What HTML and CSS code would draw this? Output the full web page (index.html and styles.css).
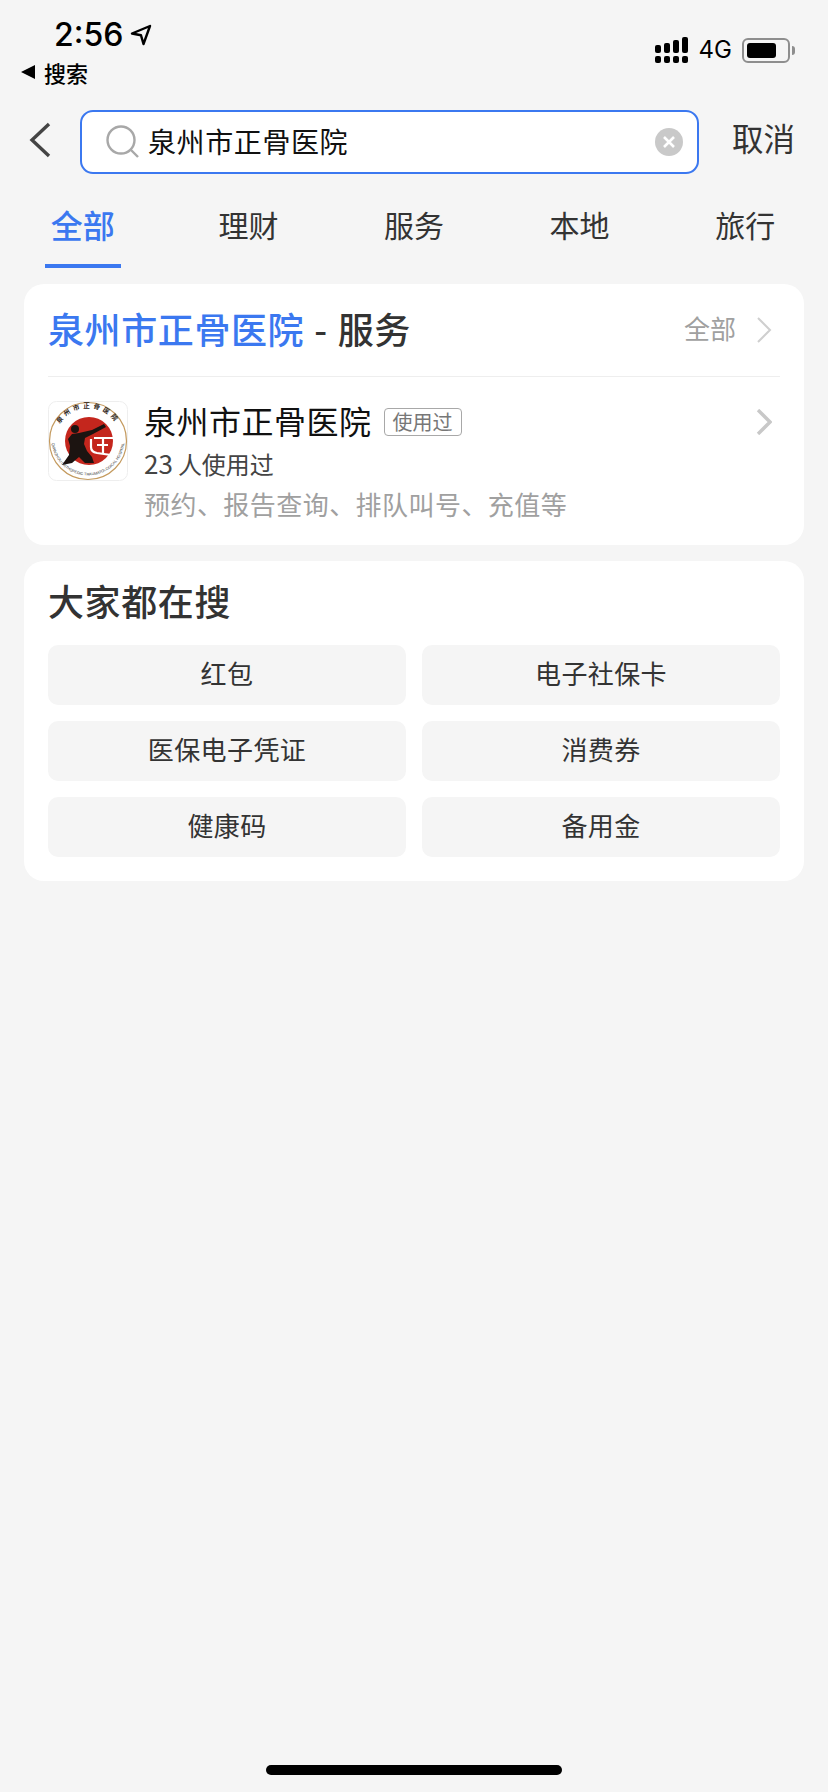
FILE: index.html
```html
<!DOCTYPE html>
<html lang="zh-CN">

<head>
  <meta charset="UTF-8">
  <meta name="viewport" content="width=device-width, initial-scale=1.0">
  <title>搜索</title>
  <link rel="stylesheet" href="styles.css">
</head>

<body>
  <div class="page">
    <div class="status-bar">
      <div class="status-left">
        <div class="time-row">
          <span class="time">2:56</span>
          <svg class="location" width="24" height="24" viewBox="0 0 24 24">
            <path d="M21 3 3 10.500l9 1.800L14.500 21z" fill="none" stroke="#000" stroke-width="2.400" stroke-linejoin="round"/>
          </svg>
        </div>
        <div class="back-app"><span class="back-tri"></span>搜索</div>
      </div>
      <div class="status-right">
        <svg class="signal" width="33" height="26" viewBox="0 0 33 26">
          <rect x="0" y="8" width="6" height="8" rx="2"/>
          <rect x="9" y="6" width="6" height="10" rx="2"/>
          <rect x="18" y="3" width="6" height="13" rx="2"/>
          <rect x="27" y="0" width="6" height="16" rx="2"/>
          <rect x="0" y="19" width="6" height="7" rx="2"/>
          <rect x="9" y="19" width="6" height="7" rx="2"/>
          <rect x="18" y="19" width="6" height="7" rx="2"/>
          <rect x="27" y="19" width="6" height="7" rx="2"/>
        </svg>
        <span class="net">4G</span>
        <div class="battery"><div class="battery-level"></div></div>
        <div class="battery-nib"></div>
      </div>
    </div>

    <div class="search-row">
      <svg class="back" width="22" height="36" viewBox="0 0 22 36">
        <path d="M20 2 3 18l17 16" fill="none" stroke="#444" stroke-width="3.400"/>
      </svg>
      <div class="search-box">
        <svg class="search-icon" width="34" height="34" viewBox="0 0 34 34">
          <circle cx="15" cy="15" r="13.500" fill="none" stroke="#a8a8a8" stroke-width="2.400"/>
          <path d="M25 25l7 7" fill="none" stroke="#a8a8a8" stroke-width="2.400"/>
        </svg>
        <span class="search-text">泉州市正骨医院</span>
        <svg class="clear" width="28" height="28" viewBox="0 0 28 28">
          <circle cx="14" cy="14" r="14" fill="#c9c9c9"/>
          <path d="M9 9l10 10M19 9 9 19" stroke="#fff" stroke-width="2.600"/>
        </svg>
      </div>
      <span class="cancel">取消</span>
    </div>

    <div class="tabs">
      <div class="tab tab-active">全部</div>
      <div class="tab">理财</div>
      <div class="tab">服务</div>
      <div class="tab">本地</div>
      <div class="tab">旅行</div>
    </div>

    <div class="card service-card">
      <div class="card-head">
        <div class="card-title"><span class="hl">泉州市正骨医院</span><span class="dash">-</span>服务</div>
        <div class="more">
          <span>全部</span>
          <svg width="16" height="26" viewBox="0 0 16 26">
            <path d="M2 1l12 12L2 25" fill="none" stroke="#cfcfcf" stroke-width="2"/>
          </svg>
        </div>
      </div>
      <div class="service-row">
        <svg class="logo" width="80" height="80" viewBox="0 0 80 80">
          <defs>
            <path id="arc-top" d="M7 40A33 33 0 0 1 73 40"/>
            <path id="arc-bottom" d="M3.500 38A36.500 36.500 0 0 0 76.500 38"/>
          </defs>
          <rect x=".5" y=".5" width="79" height="79" rx="8" fill="#fff" stroke="#eeeeee"/>
          <circle cx="40" cy="40" r="38.500" fill="none" stroke="#c49a5e" stroke-width="1.200"/>
          <circle cx="41" cy="40" r="24" fill="#c4261d"/>
          <circle cx="27" cy="28" r="4" fill="#1c1411"/>
          <path d="M24 33 31 32 44 29 56 23 58 26 45 33 37 37 36 43 39 50 44 56 46 62 37 62 31 56 24 62 14 64 21 54 22 45 20 38z" fill="#1c1411"/>
          <path d="M43 38v8q0 5 6 6l14 2M49 44h11M55 37v15M46 37h19" fill="none" stroke="#fff" stroke-width="2.200"/>
          <text class="logo-cn"><textPath href="#arc-top" startOffset="50%" text-anchor="middle">泉州市正骨医院</textPath></text>
          <text class="logo-en"><textPath href="#arc-bottom" startOffset="50%" text-anchor="middle">QUANZHOU ORTHOPEDIC TRAUMATOLOGICAL HOSPITAL</textPath></text>
        </svg>
        <div class="service-info">
          <div class="name-row">
            <span class="service-name">泉州市正骨医院</span>
            <span class="badge">使用过</span>
          </div>
          <div class="used"><span class="count">23</span>人使用过</div>
          <div class="desc">预约、报告查询、排队叫号、充值等</div>
        </div>
        <svg class="row-arrow" width="16" height="26" viewBox="0 0 16 26">
          <path d="M2 1l12 12L2 25" fill="none" stroke="#c8c8c8" stroke-width="3.400"/>
        </svg>
      </div>
    </div>

    <div class="card hot-card">
      <div class="card-title">大家都在搜</div>
      <div class="hot-grid">
        <div class="hot-item">红包</div>
        <div class="hot-item">电子社保卡</div>
        <div class="hot-item">医保电子凭证</div>
        <div class="hot-item">消费券</div>
        <div class="hot-item">健康码</div>
        <div class="hot-item">备用金</div>
      </div>
    </div>

    <div class="home-bar"></div>
  </div>
</body>

</html>
```

FILE: styles.css
```css
* {
  box-sizing: border-box;
}

body {
  margin: 0;
  background: #f5f5f5;
  font-family: "Noto Sans CJK SC", "Liberation Sans", sans-serif;
  color: #333;
}

.page {
  width: 828px;
  height: 1792px;
  display: flex;
  flex-direction: column;
  overflow: hidden;
}

/* status bar */
.status-bar {
  height: 110px;
  display: flex;
  justify-content: space-between;
  flex-shrink: 0;
}

.status-left {
  padding: 16px 0 0 21px;
}

.time-row {
  display: flex;
  align-items: center;
  height: 38px;
  padding-left: 33px;
}

.time {
  font-family: Inter, "Liberation Sans", sans-serif;
  font-size: 32px;
  font-weight: 500;
  color: #000;
  line-height: 38px;
}

.location {
  margin-left: 6px;
}

.back-app {
  display: flex;
  align-items: center;
  height: 30px;
  margin-top: 3px;
  font-size: 22px;
  font-weight: 500;
  color: #000;
  line-height: 30px;
}

.back-tri {
  width: 0;
  height: 0;
  border-top: 7px solid transparent;
  border-bottom: 7px solid transparent;
  border-right: 14px solid #000;
  margin-right: 9px;
}

.status-right {
  display: flex;
  align-items: center;
  height: 26px;
  margin: 37px 33px 0 0;
}

.signal {
  display: block;
  fill: #000;
}

.net {
  font-family: Inter, "Liberation Sans", sans-serif;
  font-size: 24px;
  color: #000;
  margin-left: 11px;
  line-height: 26px;
}

.battery {
  width: 48px;
  height: 25px;
  margin-left: 10px;
  padding: 3px;
  border: 2px solid #8e8e8e;
  border-radius: 6px;
}

.battery-level {
  width: 29px;
  height: 100%;
  background: #000;
  border-radius: 3px;
}

.battery-nib {
  width: 3px;
  height: 9px;
  margin-left: 2px;
  background: #8e8e8e;
  border-radius: 0 3px 3px 0;
}

/* search */
.search-row {
  height: 64px;
  display: flex;
  align-items: center;
  padding-left: 29px;
  flex-shrink: 0;
}

.back {
  margin-top: -5px;
}

.search-box {
  width: 619px;
  height: 64px;
  margin-left: 29px;
  display: flex;
  align-items: center;
  padding: 0 14px 0 24px;
  background: #fff;
  border: 2px solid #3b78f0;
  border-radius: 13px;
}

.search-icon {
  flex-shrink: 0;
}

.search-text {
  flex: 1;
  margin-left: 8px;
  padding-bottom: 2px;
  font-size: 28px;
  letter-spacing: 0.6px;
  color: #111;
  white-space: nowrap;
}

.cancel {
  margin: -10px 0 0 33px;
  font-size: 31.500px;
  color: #333;
  white-space: nowrap;
}

/* tabs */
.tabs {
  display: grid;
  grid-template-columns: repeat(5, 1fr);
  height: 94px;
  padding-top: 30px;
  flex-shrink: 0;
}

.tab {
  display: flex;
  justify-content: center;
  height: 64px;
  font-size: 30px;
  line-height: 40px;
  color: #333;
}

.tab-active {
  width: 76px;
  justify-self: center;
  font-size: 32px;
  font-weight: 500;
  color: #3b78f0;
  border-bottom: 4px solid #3b78f0;
  white-space: nowrap;
}

/* cards */
.card {
  width: 780px;
  margin: 0 24px;
  background: #fff;
  border-radius: 20px;
  flex-shrink: 0;
}

.service-card {
  height: 261px;
  margin-top: 16px;
  padding: 0 24px;
}

.card-head {
  height: 93px;
  display: flex;
  align-items: center;
  justify-content: space-between;
  padding-bottom: 5px;
  border-bottom: 1px solid #eeeeee;
}

.card-title {
  font-size: 36px;
  font-weight: 500;
  letter-spacing: 0.6px;
  color: #333;
  line-height: 50px;
  white-space: nowrap;
}

.hl {
  color: #3b78f0;
}

.dash {
  margin: 0 10px;
}

.more {
  display: flex;
  align-items: center;
  font-size: 26px;
  color: #a0a0a0;
  padding-right: 8px;
}

.more svg {
  margin: 4px 0 0 20px;
}

.service-row {
  display: flex;
  padding-top: 24px;
}

.logo {
  flex-shrink: 0;
}

.logo-cn {
  font-family: "Noto Sans CJK SC", sans-serif;
  font-size: 6.500px;
  font-weight: 700;
  letter-spacing: 3.200px;
  fill: #2a1a14;
}

.logo-en {
  font-family: "Liberation Sans", sans-serif;
  font-size: 3.800px;
  fill: #333;
}

.service-info {
  flex: 1;
  margin-left: 16px;
}

.name-row {
  display: flex;
  align-items: center;
  height: 38px;
}

.service-name {
  font-size: 32px;
  letter-spacing: 0.5px;
  color: #111;
  line-height: 38px;
}

.badge {
  width: 78px;
  height: 28px;
  margin: 4px 0 0 12px;
  border: 1px solid #a8a8a8;
  border-radius: 4px;
  font-size: 20px;
  line-height: 25px;
  text-align: center;
  color: #777;
  white-space: nowrap;
}

.used {
  margin-top: 4px;
  font-size: 24px;
  line-height: 40px;
  color: #444;
}

.count {
  margin-right: 5px;
  font-size: 26px;
}

.desc {
  font-size: 26px;
  letter-spacing: 0.45px;
  line-height: 40px;
  color: #a0a0a0;
}

.row-arrow {
  margin: 8px 8px 0 0;
}

.hot-card {
  height: 320px;
  margin-top: 16px;
  padding: 14px 24px 0;
}

.hot-grid {
  display: grid;
  grid-template-columns: 358px 358px;
  grid-auto-rows: 60px;
  gap: 16px;
  margin-top: 20px;
}

.hot-item {
  display: flex;
  align-items: center;
  justify-content: center;
  padding-bottom: 5px;
  background: #f5f5f5;
  border-radius: 10px;
  font-size: 26px;
  letter-spacing: 0.4px;
  color: #333;
}

.home-bar {
  width: 296px;
  height: 10px;
  margin: auto auto 17px;
  background: #000;
  border-radius: 5px;
  flex-shrink: 0;
}
```
